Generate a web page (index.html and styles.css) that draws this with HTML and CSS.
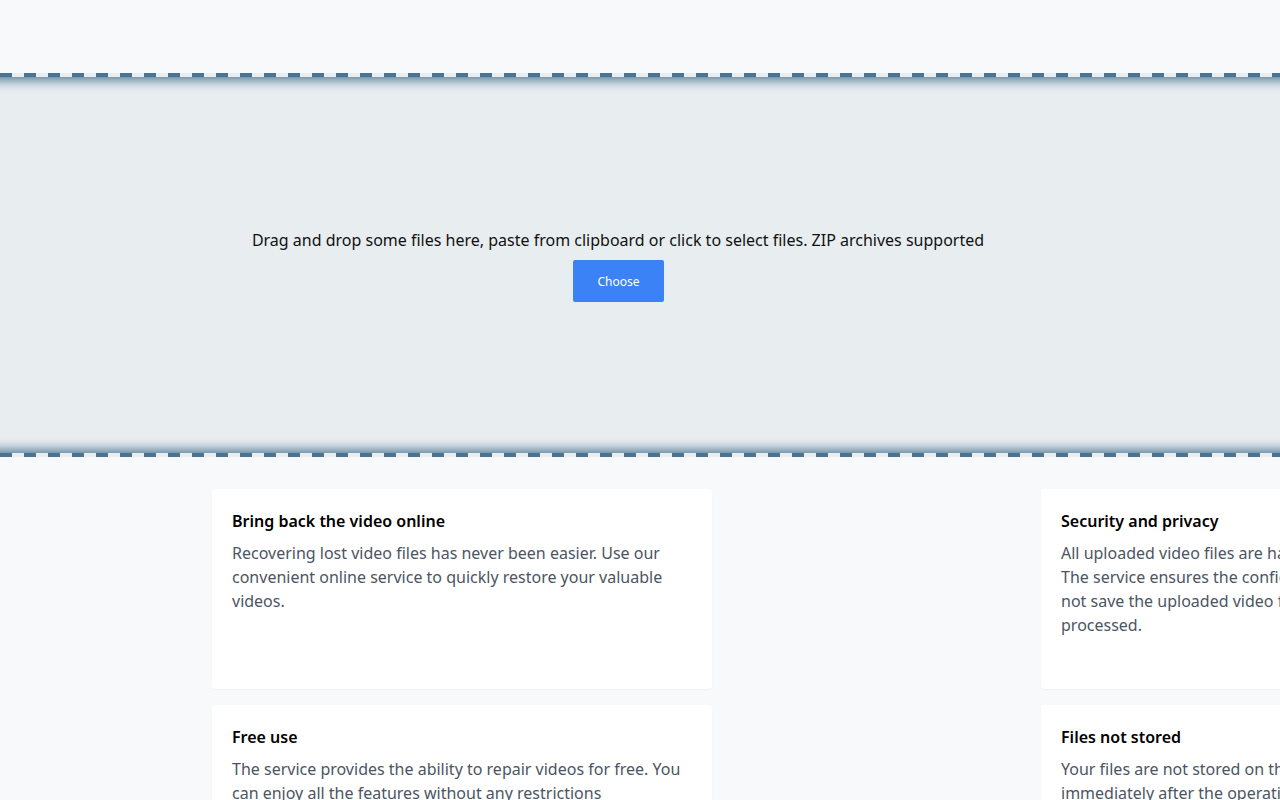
FILE: index.html
```html
<!DOCTYPE html>
<html lang="en">
<head>
    <meta charset="UTF-8">
    <meta name="viewport" content="width=device-width, initial-scale=1.0">
    <title>Repair video online</title>
    <link rel="stylesheet" href="styles.css">
</head>
<body>
    <div class="page">
        <header class="top"></header>

        <div class="dropzone">
            <div class="dash"></div>
            <div class="dropzone-inner">
                <p>Drag and drop some files here, paste from clipboard or click to select files. ZIP archives supported</p>
                <button class="choose">Choose</button>
            </div>
            <div class="dash"></div>
        </div>

        <div class="features">
            <div class="card">
                <h3>Bring back the video online</h3>
                <p>Recovering lost video files has never been easier. Use our convenient online service to quickly restore your valuable videos.</p>
            </div>
            <div class="card">
                <h3>Security and privacy</h3>
                <p>All uploaded video files are handled with the utmost security. The service ensures the confidentiality of your data and does not save the uploaded video files after they have been processed.</p>
            </div>
            <div class="card">
                <h3>Free use</h3>
                <p>The service provides the ability to repair videos for free. You can enjoy all the features without any restrictions</p>
            </div>
            <div class="card">
                <h3>Files not stored</h3>
                <p>Your files are not stored on the server and are deleted immediately after the operation is completed</p>
            </div>
        </div>
    </div>
</body>
</html>
```

FILE: styles.css
```css
* {
    padding: 0;
    margin: 0;
    box-sizing: border-box;
    font-family: "Noto Sans", sans-serif;
}
body {
    background-color: #f8f9fb;
    overflow: hidden;
}
.page {
    width: 1280px;
    overflow: hidden;
}
.top {
    height: 73px;
}

.dropzone {
    display: flex;
    flex-direction: column;
    background-color: #e8edf0;
}
.dash {
    height: 4px;
    background: repeating-linear-gradient(90deg, #4a7392 0 12px, #e8edf0 12px 24px);
}
.dropzone-inner {
    margin: 0 -30px;
    height: 376px;
    box-shadow: inset 0 0 12px 3px #4a7392;
    display: flex;
    flex-direction: column;
    align-items: center;
    justify-content: center;
    padding-right: 44px;
}
.dropzone-inner p {
    font-size: 16px;
    line-height: 24px;
    color: #111;
}
.choose {
    margin-top: 8px;
    margin-left: 1px;
    width: 91px;
    height: 42px;
    border: none;
    border-radius: 2px;
    background-color: #3b82f6;
    color: white;
    font-size: 12px;
    cursor: pointer;
}

.features {
    margin-top: 32px;
    margin-left: 212px;
    display: grid;
    grid-template-columns: 500px 500px;
    column-gap: 329px;
    row-gap: 16px;
}
.card {
    height: 200px;
    padding: 20px;
    background-color: white;
    border-radius: 4px;
    box-shadow: 0 1px 2px rgba(0, 0, 0, 0.04);
}
.card h3 {
    font-size: 16px;
    line-height: 24px;
    font-weight: 600;
    color: #000;
    margin-bottom: 8px;
}
.card p {
    font-size: 16px;
    line-height: 24px;
    color: #4b5563;
}
```
